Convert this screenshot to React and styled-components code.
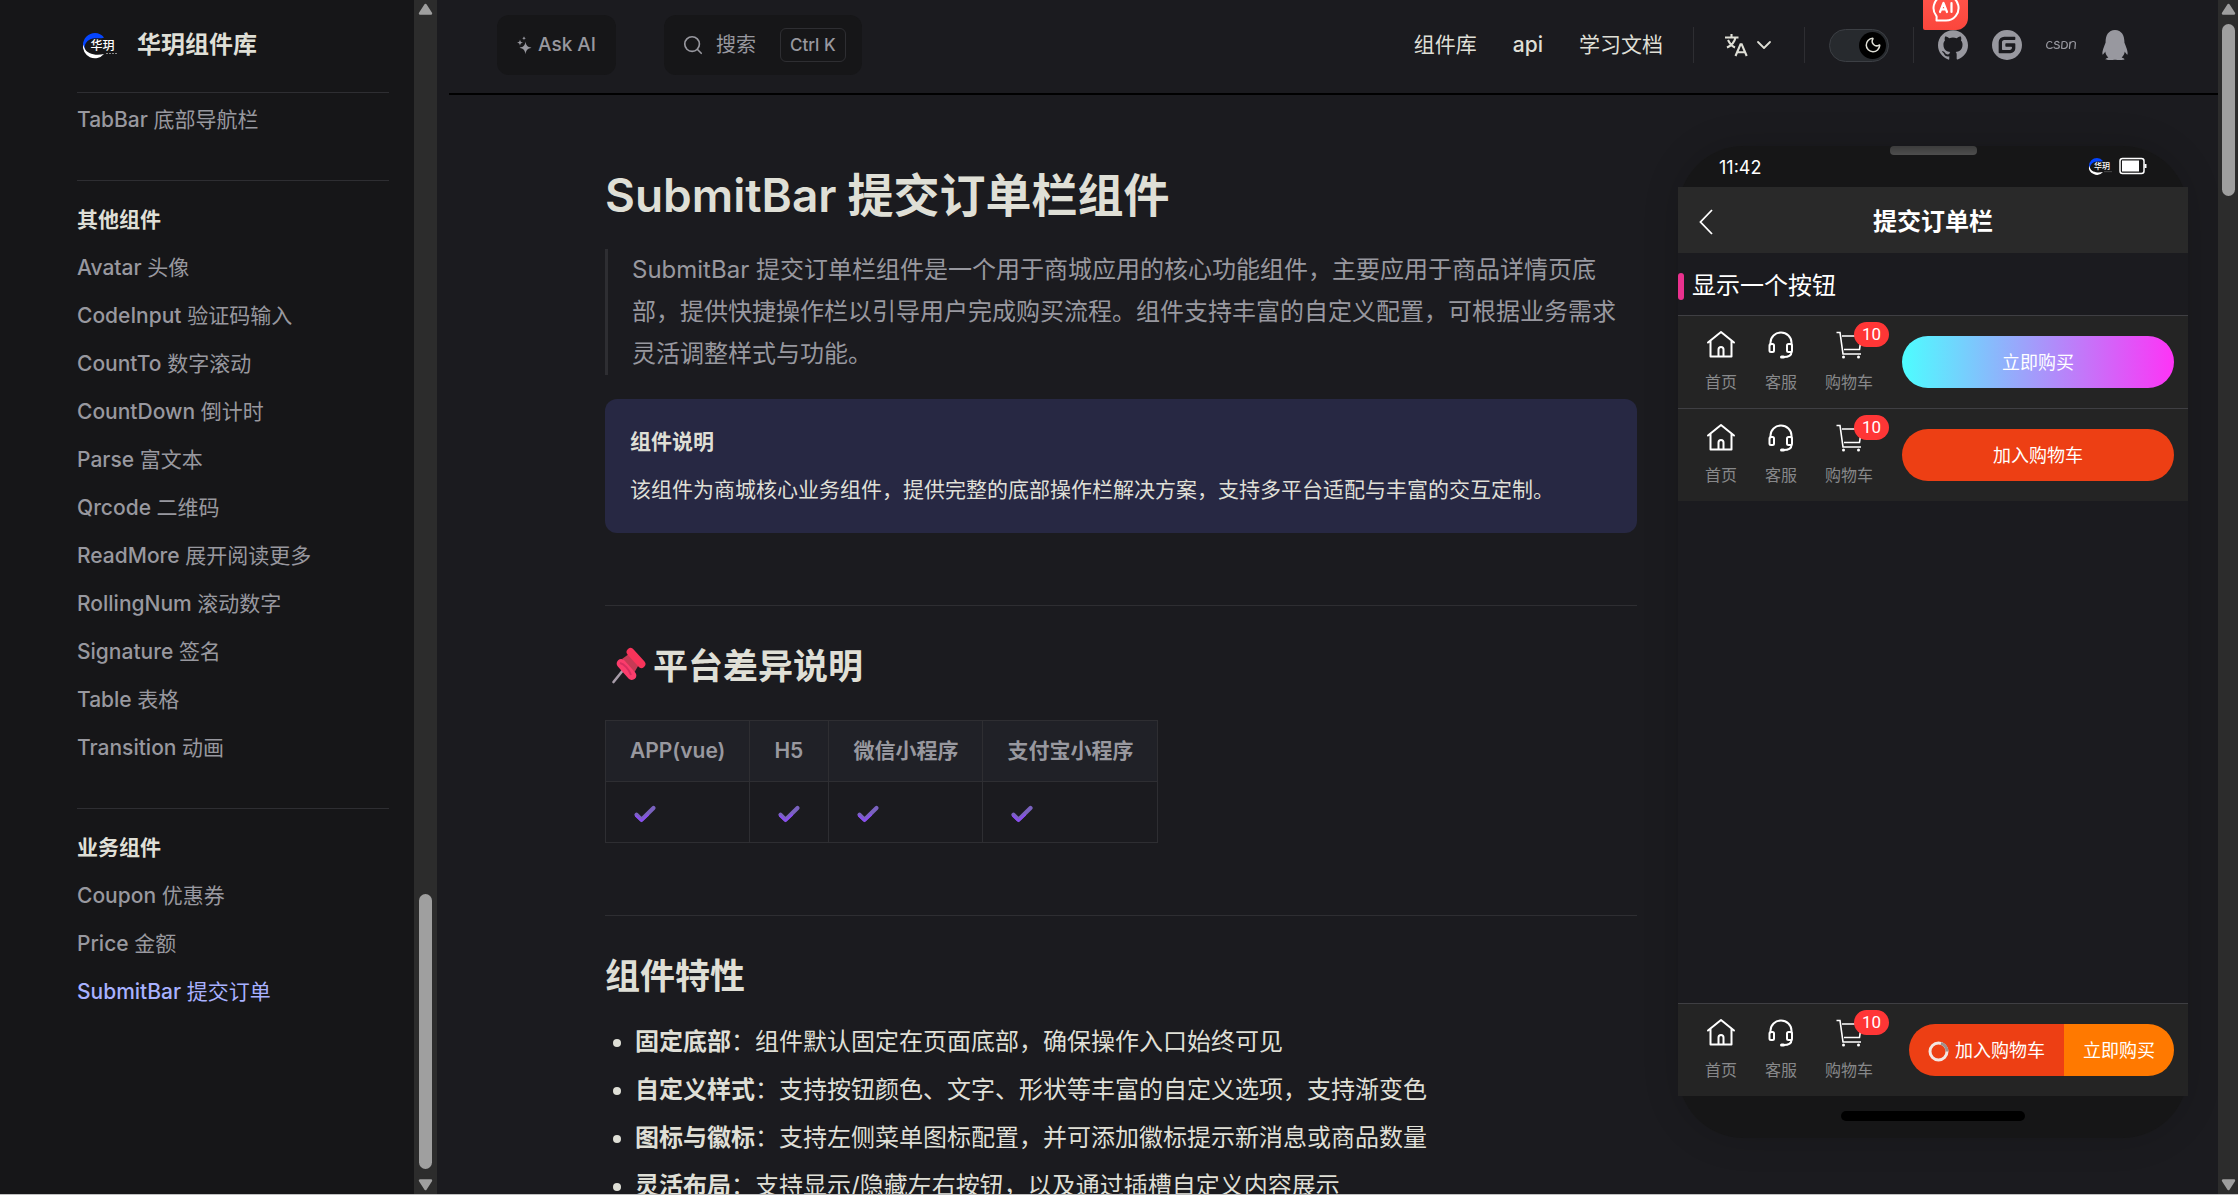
import React from "react";
import styled, { createGlobalStyle } from "styled-components";
import { SiGithub, SiGitee, SiCsdn, SiTencentqq } from "react-icons/si";
import { Search, Moon, ChevronDown } from "lucide-react";

const GlobalStyle = createGlobalStyle`
  * { box-sizing: border-box; }
  html, body { margin: 0; background: #1b1b1f; }
  body {
    overflow: hidden;
    color: #dfdfd6;
    font-family: Inter, "Noto Sans CJK SC", sans-serif;
    font-size: 24px;
    line-height: 36px;
  }
  h1, h2, p, ul, blockquote { margin: 0; padding: 0; }
  button, input { font: inherit; color: inherit; border: 0; padding: 0; background: none; }
  a { color: inherit; text-decoration: none; }
  svg { display: block; flex: none; }
`;

const Page = styled.div`
  display: flex;
  height: 100vh;
  border-bottom: 1px solid #c0c0c0;
  overflow: hidden;
`;

/* ---------- scrollbars ---------- */
const Track = styled.div`
  flex: none;
  width: ${(p) => p.$width}px;
  display: flex;
  flex-direction: column;
  align-items: center;
  justify-content: space-between;
  padding: 3px 0;
  background: #2c2c2c;
`;
const Rail = styled.div`
  flex: 1;
  display: flex;
  flex-direction: column;
  justify-content: ${(p) => (p.$end ? "flex-end" : "flex-start")};
  padding: 9px 0 10px;
`;
const Thumb = styled.div`
  width: 13px;
  height: ${(p) => p.$size}%;
  border-radius: 7px;
  background: #9f9f9f;
`;
const Arrow = ({ down }) => (
  <svg width="15" height="12" viewBox="0 0 15 12" aria-hidden="true">
    <path
      d={down ? "M2 1.5h11L7.5 10z" : "M2 10.5h11L7.5 2z"}
      fill="#9f9f9f"
      stroke="#9f9f9f"
      strokeWidth="2.4"
      strokeLinejoin="round"
    />
  </svg>
);
const Scrollbar = ({ width, size, end }) => (
  <Track $width={width} aria-hidden="true">
    <Arrow />
    <Rail $end={end}>
      <Thumb $size={size} />
    </Rail>
    <Arrow down />
  </Track>
);

/* ---------- sidebar ---------- */
const Sidebar = styled.aside`
  flex: none;
  width: 414px;
  padding: 0 25px 0 77px;
  background: #161618;
`;
const Brand = styled.a`
  display: flex;
  align-items: center;
  gap: 12px;
  height: 93px;
  padding-bottom: 2px;
  border-bottom: 1px solid #2e2e32;
  font-size: 24px;
  font-weight: 700;
`;
const MenuGroup = styled.section`
  padding: ${(p) => (p.$first ? "3px 0 36px" : "15px 0 36px")};
  border-top: ${(p) => (p.$first ? "0" : "1px solid #2e2e32")};
`;
const MenuTitle = styled.h2`
  padding: 6px 0;
  font-size: 21px;
  font-weight: 700;
  line-height: 36px;
`;
const MenuLink = styled.a`
  display: block;
  padding: 6px 0;
  font-size: 21px;
  font-weight: 500;
  line-height: 36px;
  color: ${(p) => (p.$active ? "#a8b1ff" : "#98989f")};
`;
const Plain = styled.span`
  font-weight: 400;
`;

const LogoText = styled.text`
  font-family: "Noto Sans CJK SC", sans-serif;
  font-weight: 500;
`;
const Logo = ({ size = 48 }) => (
  <svg width={size} height={size} viewBox="0 0 48 48" aria-hidden="true">
    <path d="M18 12A12 12 0 0 0 6 24c0 2 .6 4 1.500 5.500C7 23 10 18.500 16 17.500c4-.7 8 .5 11-1A12 12 0 0 0 18 12z" fill="#0545ff" />
    <path d="M6 23.500a12 12 0 0 0 21 9.500c-8 2-17.500 0-19.500-6z" fill="#fff" />
    <LogoText x="13.5" y="28.5" fontSize="12" fill="#fff">华玥</LogoText>
    <path d="M29 32.500h11" stroke="#888" strokeDasharray="2 1" />
  </svg>
);

/* ---------- header ---------- */
const Main = styled.div`
  flex: 1;
  min-width: 0;
  display: flex;
  flex-direction: column;
`;
const Header = styled.header`
  flex: none;
  display: flex;
  align-items: center;
  height: 95px;
  margin-left: 12px;
  padding: 0 88px 3px 48px;
  border-bottom: 2px solid #000;
`;
const AskButton = styled.button`
  display: flex;
  align-items: center;
  gap: 6px;
  height: 60px;
  padding: 0 20px;
  border-radius: 12px;
  background: #161618;
  color: #98989f;
  font-size: 19px;
  font-weight: 500;
`;
const SearchButton = styled(AskButton)`
  gap: 0;
  margin-left: 48px;
  padding: 0 16px 0 18px;
`;
const SearchLabel = styled.span`
  margin: 0 24px 0 12px;
  font-size: 20px;
  font-weight: 400;
`;
const Keys = styled.kbd`
  padding: 0 9px;
  border: 1px solid #2e2e32;
  border-radius: 6px;
  font-family: inherit;
  font-size: 17px;
  line-height: 32px;
`;
const Nav = styled.nav`
  display: flex;
  gap: 36px;
  margin-left: auto;
  padding-right: 6px;
  font-size: 21px;
  font-weight: 500;
`;
const Divider = styled.span`
  width: 1px;
  height: 36px;
  margin: 0 24px;
  background: #2e2e32;
`;
const LangButton = styled.button`
  display: flex;
  align-items: center;
  gap: 4px;
  padding: 0 4px 0 6px;
`;
const Switch = styled.label`
  display: flex;
  justify-content: flex-end;
  align-items: center;
  width: 60px;
  height: 33px;
  padding: 2px;
  border: 1px solid #3c3f44;
  border-radius: 17px;
  background: #272a2e;
`;
const HiddenCheck = styled.input`
  appearance: none;
  width: 1px;
  height: 1px;
  margin: 0;
`;
const Knob = styled.span`
  display: grid;
  place-items: center;
  width: 27px;
  height: 27px;
  border-radius: 50%;
  background: #000;
`;
const Socials = styled.div`
  position: relative;
  display: flex;
  gap: 24px;
  color: #98989f;
`;
const AiBadge = styled.span`
  position: absolute;
  left: -15px;
  top: -30px;
  width: 45px;
  height: 30px;
  border-radius: 0 0 12px 2px;
  background: linear-gradient(#ff5248, #fb463c);
`;

/* ---------- article ---------- */
const Content = styled.div`
  flex: 1;
  min-height: 0;
  display: flex;
  align-items: flex-start;
  gap: 41px;
  padding: 0 30px 0 168px;
`;
const Article = styled.main`
  flex: 1;
  min-width: 0;
  padding-top: 70px;
`;
const Title = styled.h1`
  font-size: 46px;
  font-weight: 700;
  line-height: 60px;
`;
const TitleName = styled.span`
  font-weight: 600;
`;
const Quote = styled.blockquote`
  margin: 24px 0;
  padding-left: 24px;
  border-left: 3px solid #2e2e32;
  color: #98989f;
  line-height: 42px;
`;
const Tip = styled.section`
  padding: 25px;
  border-radius: 12px;
  background: #272843;
  font-size: 21px;
`;
const TipTitle = styled.p`
  margin-bottom: 12px;
  font-weight: 700;
`;
const Heading = styled.h2`
  display: flex;
  align-items: center;
  gap: 6px;
  margin-top: 72px;
  padding-top: 36px;
  border-top: 1px solid #2e2e32;
  font-size: 35px;
  font-weight: 700;
  line-height: 48px;
`;
const Table = styled.table`
  margin-top: 30px;
  border-collapse: collapse;
  font-size: 21px;
`;
const Th = styled.th`
  height: 61px;
  padding: 0 24px;
  border: 1px solid #2e2e32;
  background: #202127;
  color: #98989f;
  font-weight: 600;
  text-align: left;
`;
const Td = styled.td`
  height: 61px;
  padding: 4px 26px 0;
  border: 1px solid #2e2e32;
`;
const Features = styled.ul`
  display: grid;
  gap: 12px;
  margin-top: 24px;
  padding-left: 30px;
`;
const Strong = styled.strong`
  font-weight: 700;
`;

/* ---------- phone ---------- */
const Phone = styled.aside`
  flex: none;
  display: flex;
  flex-direction: column;
  width: 510px;
  height: 992px;
  margin-top: 51px;
  border-radius: 66px;
  background: #161617;
  box-shadow: 0 0 36px rgba(0, 0, 0, 0.16);
  font-family: Roboto, "Noto Sans CJK SC", sans-serif;
  color: #fff;
`;
const StatusBar = styled.div`
  position: relative;
  display: flex;
  align-items: center;
  height: 41px;
  padding: 3px 41px 0;
  font-family: Inter, sans-serif;
  font-size: 18px;
`;
const Notch = styled.span`
  position: absolute;
  top: 0;
  left: 50%;
  width: 87px;
  height: 9px;
  margin-left: -43px;
  border-radius: 4px;
  background: linear-gradient(#3c3c3c, #4e4e4e);
`;
const StatusIcons = styled.span`
  display: flex;
  align-items: center;
  gap: 2px;
  margin-left: auto;
  padding-bottom: 4px;
`;
const TitleBar = styled.div`
  display: grid;
  grid-template-columns: 14px 1fr 14px;
  align-items: center;
  height: 66px;
  padding: 3px 21px 0;
  background: #292929;
  font-weight: 700;
  text-align: center;
`;
const Screen = styled.div`
  flex: 1;
  display: flex;
  flex-direction: column;
  background: #1b1b1f;
`;
const SectionTitle = styled.div`
  display: flex;
  align-items: center;
  gap: 8px;
  height: 62px;
  padding-top: 4px;
`;
const Mark = styled.span`
  width: 6px;
  height: 27px;
  border-radius: 3px;
  background: #ea318e;
`;
const Bar = styled.div`
  display: flex;
  justify-content: space-between;
  height: 93px;
  margin-top: ${(p) => (p.$bottom ? "auto" : "0")};
  padding: 14px 14px 0 27px;
  border-top: 1px solid #3f3f43;
  background: #242424;
`;
const Actions = styled.div`
  display: flex;
  gap: 28px;
`;
const Action = styled.button`
  position: relative;
  display: flex;
  flex-direction: column;
  align-items: center;
  gap: 11px;
  height: 65px;
  color: #fff;
`;
const ActionLabel = styled.span`
  color: #87888a;
  font-size: 16px;
  line-height: 24px;
`;
const Badge = styled.span`
  position: absolute;
  top: -8px;
  left: 29px;
  padding: 0 8px;
  border-radius: 13px;
  background: #ff3636;
  font-size: 17px;
  line-height: 25px;
`;
const Pill = styled.button`
  display: flex;
  align-items: center;
  justify-content: center;
  gap: 6px;
  height: 52px;
  margin-top: 6px;
  padding: 2px 19px 0;
  width: ${(p) => (p.$wide ? "272px" : "auto")};
  border-radius: ${(p) => p.$radius || "26px"};
  background: ${(p) => p.$fill};
  color: #fff;
  font-size: 18px;
`;
const PillGroup = styled.div`
  display: flex;
`;
const HomeArea = styled.div`
  height: 42px;
  padding-top: 15px;
`;
const HomeLine = styled.div`
  width: 184px;
  height: 10px;
  margin: 0 auto;
  border-radius: 5px;
  background: #000;
`;

/* ---------- drawings ---------- */
const Sparkles = () => (
  <svg width="15" height="19" viewBox="0 0 15 19" fill="currentColor" aria-hidden="true">
    <path d="M8.500 5.500c.6 4 1.800 5.300 6 6.200-4.200 1-5.400 2.300-6 6.600-.6-4.300-1.800-5.600-6-6.600 4.200-.9 5.400-2.200 6-6.200z" />
    <path d="M3 3.500c.3 2 .9 2.700 3 3.100-2.100.5-2.700 1.200-3 3.200-.3-2-.9-2.700-3-3.200 2.100-.4 2.700-1.100 3-3.100z" />
    <path d="M7 0c.2 1.400.6 1.900 2 2.200-1.400.3-1.800.8-2 2.200-.2-1.400-.6-1.900-2-2.200C6.400 1.900 6.800 1.400 7 0z" />
  </svg>
);
const TranslateIcon = () => (
  <svg width="24" height="24" viewBox="0 0 24 24" fill="none" stroke="currentColor" strokeWidth="2.100" aria-hidden="true">
    <path d="M1 4.500h13.500M7.500 1v3.500M4 7c2 4 4.500 6.500 7 7.500M11.500 4.500c-1 5-4 8-8.500 10" />
    <path d="M11.500 23l5-11.700h1.200l5 11.700M13.200 19.300h8" />
  </svg>
);
const AiIcon = () => (
  <svg width="45" height="30" viewBox="0 0 45 30" fill="none" stroke="#fff" strokeLinecap="round" strokeLinejoin="round" aria-hidden="true">
    <path d="M13.500 20.500h9.500a12.500 12.500 0 1 0-9.800-4.800c.5.700.6 1.300.4 2z" strokeWidth="2" />
    <path d="M17 12l3.500-9 3.500 9M18.200 9.300h4.600M28.500 3v9" strokeWidth="2.200" />
  </svg>
);
const Pushpin = () => (
  <svg width="42" height="42" viewBox="0 0 42 42" aria-hidden="true">
    <path d="M19 24L8.500 37" stroke="#a79ca9" strokeWidth="2.600" strokeLinecap="round" />
    <path d="M17 14l11-8 8 10-7 12z" fill="#c63a55" />
    <rect x="19" y="9" width="24" height="8" rx="4" transform="rotate(48 31 13)" fill="#f8345a" />
    <rect x="9" y="20" width="25" height="9" rx="4.500" transform="rotate(48 21.5 24.5)" fill="#fb3d6c" />
    <path d="M15 18c4 1 9 6 11 12" stroke="#d92d60" strokeWidth="2" fill="none" />
  </svg>
);
const CheckMark = () => (
  <svg width="26" height="18" viewBox="0 0 26 18" fill="none" role="img" aria-label="支持">
    <path d="M4.500 9.800l5 5L21.500 3" stroke="#7a62bf" strokeWidth="4.200" strokeLinejoin="round" strokeLinecap="round" />
    <path d="M4 11l5.500 5L16 10" stroke="#8a4df0" strokeWidth="2" strokeLinecap="round" />
  </svg>
);
const BatteryIcon = () => (
  <svg width="28" height="18" viewBox="0 0 28 18" fill="none" aria-hidden="true">
    <rect x="1" y="1.500" width="24" height="15" rx="2.500" stroke="#fff" strokeWidth="1.500" />
    <rect x="3" y="3.500" width="17" height="11" fill="#fff" />
    <path d="M26.500 7v4" stroke="#fff" strokeWidth="2" />
  </svg>
);
const BackIcon = () => (
  <svg width="14" height="26" viewBox="0 0 14 26" fill="none" stroke="#fff" strokeWidth="1.800" aria-hidden="true">
    <path d="M13 1L1.500 13 13 25" />
  </svg>
);
const actionStroke = { width: 30, height: 30, viewBox: "0 0 30 30", fill: "none", stroke: "currentColor", strokeWidth: 2, "aria-hidden": true };
const HomeIcon = () => (
  <svg {...actionStroke} strokeLinejoin="round" strokeLinecap="round">
    <path d="M2 12.500L15 2l13 10.500M4.500 11v15.500h21V11" />
    <path d="M12.500 26v-6.500a2.500 2.500 0 0 1 5 0V26" />
  </svg>
);
const HeadsetIcon = () => (
  <svg {...actionStroke} strokeLinecap="round">
    <path d="M4.500 14.500v-2a10.500 10 0 0 1 21 0v2" />
    <rect x="3.500" y="14" width="4.500" height="8" rx="1.500" />
    <rect x="21" y="14" width="5" height="8" rx="1.500" />
    <path d="M25.500 22c0 3-3 5-8 5" />
    <path d="M15.500 27h2" strokeWidth="3" />
  </svg>
);
const CartIcon = () => (
  <svg {...actionStroke} strokeWidth="1.600">
    <path d="M2.500 2.500h3.500l3 21.500h18" />
    <path d="M8 6h19.500l-2 13.500H10" />
    <circle cx="9.500" cy="27" r="1.500" fill="currentColor" stroke="none" />
    <circle cx="24.500" cy="27" r="1.500" fill="currentColor" stroke="none" />
  </svg>
);
const Spinner = () => (
  <svg width="21" height="21" viewBox="0 0 21 21" fill="none" strokeWidth="3" aria-hidden="true">
    <circle cx="10.500" cy="10.500" r="8.500" stroke="#f3e6e2" />
    <path d="M13 2.400a8.500 8.500 0 0 1 6 8.100" stroke="#a08f8c" />
  </svg>
);

const groups = [
  { title: null, items: [["TabBar", "底部导航栏"]] },
  {
    title: "其他组件",
    items: [
      ["Avatar", "头像"],
      ["CodeInput", "验证码输入"],
      ["CountTo", "数字滚动"],
      ["CountDown", "倒计时"],
      ["Parse", "富文本"],
      ["Qrcode", "二维码"],
      ["ReadMore", "展开阅读更多"],
      ["RollingNum", "滚动数字"],
      ["Signature", "签名"],
      ["Table", "表格"],
      ["Transition", "动画"],
    ],
  },
  {
    title: "业务组件",
    items: [
      ["Coupon", "优惠券"],
      ["Price", "金额"],
      ["SubmitBar", "提交订单"],
    ],
  },
];
const platforms = ["APP(vue)", "H5", "微信小程序", "支付宝小程序"];
const features = [
  ["固定底部", "组件默认固定在页面底部，确保操作入口始终可见"],
  ["自定义样式", "支持按钮颜色、文字、形状等丰富的自定义选项，支持渐变色"],
  ["图标与徽标", "支持左侧菜单图标配置，并可添加徽标提示新消息或商品数量"],
  ["灵活布局", "支持显示/隐藏左右按钮，以及通过插槽自定义内容展示"],
];

const SubmitBar = ({ bottom, children }) => (
  <Bar $bottom={bottom}>
    <Actions>
      <Action type="button">
        <HomeIcon />
        <ActionLabel>首页</ActionLabel>
      </Action>
      <Action type="button">
        <HeadsetIcon />
        <ActionLabel>客服</ActionLabel>
      </Action>
      <Action type="button">
        <CartIcon />
        <ActionLabel>购物车</ActionLabel>
        <Badge>10</Badge>
      </Action>
    </Actions>
    {children}
  </Bar>
);

export default function App() {
  return (
    <>
      <GlobalStyle />
      <Page>
        <Sidebar>
          <Brand href="#">
            <Logo />
            华玥组件库
          </Brand>
          {groups.map((g) => (
            <MenuGroup key={g.items[0][0]} $first={!g.title}>
              {g.title && <MenuTitle>{g.title}</MenuTitle>}
              {g.items.map(([name, label]) => (
                <MenuLink key={name} href="#" $active={name === "SubmitBar"}>
                  {name} <Plain>{label}</Plain>
                </MenuLink>
              ))}
            </MenuGroup>
          ))}
        </Sidebar>
        <Scrollbar width={23} size={24} end />

        <Main>
          <Header>
            <AskButton type="button">
              <Sparkles />
              Ask AI
            </AskButton>
            <SearchButton type="button">
              <Search size={22} strokeWidth={1.8} />
              <SearchLabel>搜索</SearchLabel>
              <Keys>Ctrl K</Keys>
            </SearchButton>
            <Nav>
              <a href="#"><Plain>组件库</Plain></a>
              <a href="#">api</a>
              <a href="#"><Plain>学习文档</Plain></a>
            </Nav>
            <Divider />
            <LangButton type="button" aria-label="切换语言">
              <TranslateIcon />
              <ChevronDown size={24} strokeWidth={1.8} />
            </LangButton>
            <Divider />
            <Switch>
              <HiddenCheck type="checkbox" defaultChecked aria-label="深色模式" />
              <Knob>
                <Moon size={18} />
              </Knob>
            </Switch>
            <Divider />
            <Socials>
              <a href="#" aria-label="GitHub"><SiGithub size={30} /></a>
              <a href="#" aria-label="Gitee"><SiGitee size={30} /></a>
              <a href="#" aria-label="CSDN"><SiCsdn size={30} /></a>
              <a href="#" aria-label="QQ"><SiTencentqq size={30} /></a>
              <AiBadge>
                <AiIcon />
              </AiBadge>
            </Socials>
          </Header>

          <Content>
            <Article>
              <Title>
                <TitleName>SubmitBar</TitleName> 提交订单栏组件
              </Title>
              <Quote>
                SubmitBar 提交订单栏组件是一个用于商城应用的核心功能组件，主要应用于商品详情页底部，提供快捷操作栏以引导用户完成购买流程。组件支持丰富的自定义配置，可根据业务需求灵活调整样式与功能。
              </Quote>
              <Tip>
                <TipTitle>组件说明</TipTitle>
                <p>该组件为商城核心业务组件，提供完整的底部操作栏解决方案，支持多平台适配与丰富的交互定制。</p>
              </Tip>

              <Heading>
                <Pushpin />
                平台差异说明
              </Heading>
              <Table>
                <thead>
                  <tr>
                    {platforms.map((name) => (
                      <Th key={name} scope="col">{name}</Th>
                    ))}
                  </tr>
                </thead>
                <tbody>
                  <tr>
                    {platforms.map((name) => (
                      <Td key={name}><CheckMark /></Td>
                    ))}
                  </tr>
                </tbody>
              </Table>

              <Heading>组件特性</Heading>
              <Features>
                {features.map(([name, text]) => (
                  <li key={name}>
                    <Strong>{name}</Strong>：{text}
                  </li>
                ))}
              </Features>
            </Article>

            <Phone>
              <StatusBar>
                <Notch />
                11:42
                <StatusIcons>
                  <Logo size={32} />
                  <BatteryIcon />
                </StatusIcons>
              </StatusBar>
              <TitleBar>
                <BackIcon />
                提交订单栏
              </TitleBar>
              <Screen>
                <SectionTitle>
                  <Mark />
                  显示一个按钮
                </SectionTitle>
                <SubmitBar>
                  <Pill type="button" $wide $fill="linear-gradient(90deg, #4dfdff, #fe33f6)">立即购买</Pill>
                </SubmitBar>
                <SubmitBar>
                  <Pill type="button" $wide $fill="#ed3f14">加入购物车</Pill>
                </SubmitBar>
                <SubmitBar bottom>
                  <PillGroup>
                    <Pill type="button" $fill="#ed3f14" $radius="26px 0 0 26px">
                      <Spinner />
                      加入购物车
                    </Pill>
                    <Pill type="button" $fill="#ff7900" $radius="0 26px 26px 0">立即购买</Pill>
                  </PillGroup>
                </SubmitBar>
              </Screen>
              <HomeArea>
                <HomeLine />
              </HomeArea>
            </Phone>
          </Content>
        </Main>
        <Scrollbar width={20} size={15} />
      </Page>
    </>
  );
}
